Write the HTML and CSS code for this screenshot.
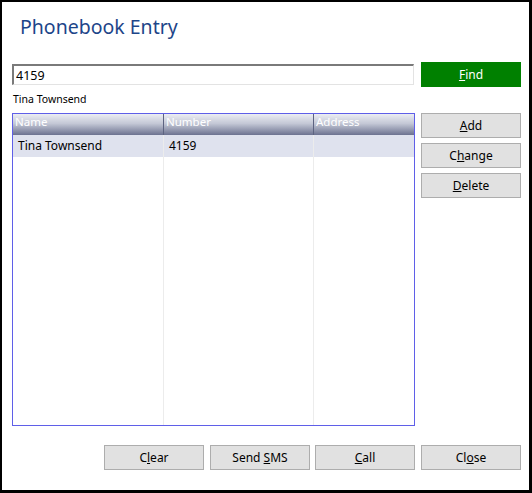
FILE: index.html
```html
<!DOCTYPE html>
<html>
<head>
	<title>Phonebook Entry</title>
	<meta charset="utf-8">
	<link rel="stylesheet" href="styles.css">
</head>
<body>
<div class='window'>
	<h1 class='title'>Phonebook Entry</h1>
	<div class='search'>
		<input class='field' type='text' value='4159'>
		<button class='btn find'><u>F</u>ind</button>
	</div>
	<div class='caption'>Tina Townsend</div>
	<div class='main'>
		<div class='list'>
			<div class='head'>
				<span class='col name'>Name</span>
				<span class='col number'>Number</span>
				<span class='col address'>Address</span>
			</div>
			<div class='row selected'>
				<span class='col name'>Tina Townsend</span>
				<span class='col number'>4159</span>
				<span class='col address'></span>
			</div>
			<div class='rest'>
				<span class='col name'></span>
				<span class='col number'></span>
				<span class='col address'></span>
			</div>
		</div>
		<div class='side'>
			<button class='btn'><u>A</u>dd</button>
			<button class='btn'>C<u>h</u>ange</button>
			<button class='btn'><u>D</u>elete</button>
		</div>
	</div>
	<div class='bottom'>
		<button class='btn'>C<u>l</u>ear</button>
		<button class='btn'>Send <u>S</u>MS</button>
		<button class='btn'><u>C</u>all</button>
		<button class='btn'>Cl<u>o</u>se</button>
	</div>
</div>
</body>
</html>
```

FILE: styles.css
```css
body {
	margin: 0;
	background: #fff;
	font-family: "Noto Sans", "Open Sans", sans-serif;
	font-size: 12px;
	color: #000;
}
.window {
	width: 532px;
	height: 493px;
	box-sizing: border-box;
	border-style: solid;
	border-color: #000;
	border-width: 2px 3px 3px 2px;
	padding: 0 8px 0 10px;
	display: flex;
	flex-direction: column;
}
.title {
	margin: 11px 0 0 8px;
	height: 32px;
	font-size: 19.5px;
	font-weight: normal;
	line-height: 28px;
	color: #1d4589;
}
.search {
	display: flex;
	justify-content: space-between;
	align-items: center;
	margin-top: 17px;
	height: 25px;
}
.field {
	width: 402px;
	height: 21px;
	box-sizing: border-box;
	margin: 0;
	padding: 0 0 0 2px;
	border-style: solid;
	border-width: 2px 1px 1px 2px;
	border-color: #7a7a7a #e3e3e3 #e3e3e3 #7a7a7a;
	font-family: inherit;
	font-size: 12.5px;
	color: #000;
	outline: none;
}
.btn {
	width: 100px;
	height: 25px;
	box-sizing: border-box;
	margin: 0;
	padding: 0;
	border: 1px solid #adadad;
	background: #e1e1e1;
	font-family: inherit;
	font-size: 12px;
	color: #000;
}
.find {
	border-color: #008000;
	background: #008000;
	color: #fff;
}
.caption {
	margin: 4px 0 0 1px;
	height: 22px;
	font-size: 10.5px;
	line-height: 16px;
}
.main {
	display: flex;
	justify-content: space-between;
	height: 313px;
}
.list {
	width: 403px;
	box-sizing: border-box;
	border: 1px solid #5f5fe8;
	display: flex;
	flex-direction: column;
}
.head,
.row,
.rest {
	display: flex;
}
.head {
	height: 21px;
	background: linear-gradient(#eceef3, #c4c8d6 45%, #6c7290);
	color: #fff;
	font-size: 11.5px;
	line-height: 16px;
}
.head .col {
	padding-left: 2px;
	border-right: 1px solid #5d6380;
}
.col {
	box-sizing: border-box;
}
.name {
	width: 151px;
}
.number {
	width: 150px;
}
.address {
	flex: 1;
	border-right: none !important;
}
.row {
	height: 22px;
	background: #dfe2ee;
	line-height: 21px;
}
.row .col {
	padding-left: 5px;
}
.rest {
	flex: 1;
}
.rest .col,
.row .col {
	border-right: 1px solid #ececec;
}
.side {
	display: flex;
	flex-direction: column;
	gap: 5px;
}
.bottom {
	display: flex;
	justify-content: flex-end;
	gap: 6px;
	margin-top: 19px;
}
.bottom .btn:nth-child(3) {
	margin-left: -1px;
}
```
